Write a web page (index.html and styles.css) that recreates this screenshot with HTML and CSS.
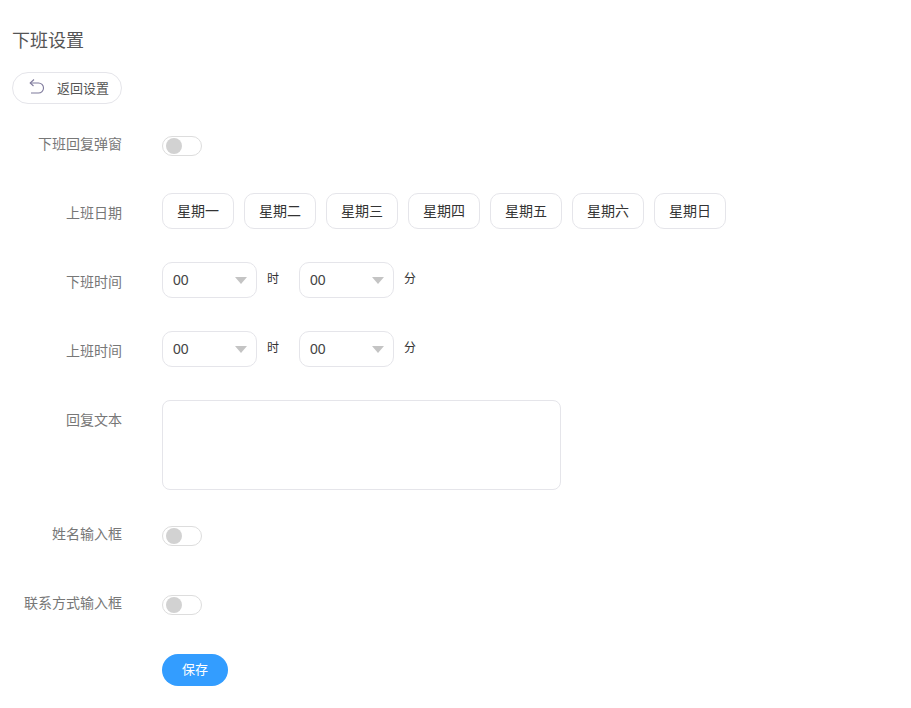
FILE: index.html
```html
<!DOCTYPE html>
<html lang="zh-CN">
<head>
  <meta charset="UTF-8" />
  <meta name="viewport" content="width=device-width, initial-scale=1" />
  <title>下班设置</title>
  <link rel="stylesheet" href="styles.css">
</head>
<body>

  <h1 class="page-title">下班设置</h1>

  <button class="back-btn">
    <svg class="back-icon" width="16" height="16" viewBox="0 0 16 16" fill="none" stroke="#7f7a9c" stroke-width="1.1">
      <path d="M1.5 4H9.5A5 5 0 0 1 9.5 14H2"/>
      <path d="M5 0.5L1.2 4L4.5 7"/>
    </svg>
    <span>返回设置</span>
  </button>

  <div class="form-row">
    <label class="form-label">下班回复弹窗</label>
    <span class="switch"><span class="switch-dot"></span></span>
  </div>

  <div class="form-row">
    <label class="form-label">上班日期</label>
    <div class="week-list">
      <button class="week-btn">星期一</button>
      <button class="week-btn">星期二</button>
      <button class="week-btn">星期三</button>
      <button class="week-btn">星期四</button>
      <button class="week-btn">星期五</button>
      <button class="week-btn">星期六</button>
      <button class="week-btn">星期日</button>
    </div>
  </div>

  <div class="form-row">
    <label class="form-label">下班时间</label>
    <div class="time-select"><span>00</span><i class="caret"></i></div>
    <span class="time-unit">时</span>
    <div class="time-select"><span>00</span><i class="caret"></i></div>
    <span class="time-unit">分</span>
  </div>

  <div class="form-row">
    <label class="form-label">上班时间</label>
    <div class="time-select"><span>00</span><i class="caret"></i></div>
    <span class="time-unit">时</span>
    <div class="time-select"><span>00</span><i class="caret"></i></div>
    <span class="time-unit">分</span>
  </div>

  <div class="form-row">
    <label class="form-label">回复文本</label>
    <textarea class="reply-text"></textarea>
  </div>

  <div class="form-row">
    <label class="form-label">姓名输入框</label>
    <span class="switch"><span class="switch-dot"></span></span>
  </div>

  <div class="form-row">
    <label class="form-label">联系方式输入框</label>
    <span class="switch"><span class="switch-dot"></span></span>
  </div>

  <div class="form-row">
    <label class="form-label"></label>
    <button class="save-btn">保存</button>
  </div>

</body>
</html>
```

FILE: styles.css
```css
body {
  font-family: "Liberation Sans", "Noto Sans CJK SC", sans-serif;
  background: #fff;
  margin: 0;
  padding: 0 12px;
  color: #333;
  font-size: 14px;
}
.page-title {
  font-size: 18px;
  font-weight: normal;
  line-height: 24px;
  color: #555;
  margin: 0;
  padding-top: 29px;
}
.back-btn {
  display: flex;
  align-items: center;
  width: 110px;
  height: 32px;
  margin: 19px 0 20px;
  padding: 0 0 0 16px;
  background: #fff;
  border: 1px solid #e5e5ea;
  border-radius: 16px;
  font-family: inherit;
  font-size: 13px;
  color: #555;
}
.back-btn span {
  margin-top: -2px;
}
.back-icon {
  margin: -2px 12px 0 0;
}
.form-row {
  display: flex;
  align-items: flex-start;
  min-height: 45px;
  margin-bottom: 24px;
}
.form-label {
  flex: none;
  width: 110px;
  margin-right: 40px;
  text-align: right;
  line-height: 40px;
  font-size: 14px;
  color: #777;
}
.switch {
  display: block;
  box-sizing: border-box;
  width: 40px;
  height: 20px;
  margin-top: 12px;
  padding: 1px 3px;
  border: 1px solid #ddd;
  border-radius: 10px;
}
.switch-dot {
  display: block;
  width: 16px;
  height: 16px;
  border-radius: 50%;
  background: #d2d2d2;
}
.week-list {
  display: flex;
  gap: 10px;
}
.week-btn {
  width: 72px;
  height: 36px;
  padding: 0 0 2px;
  background: #fff;
  border: 1px solid #e5e5ea;
  border-radius: 10px;
  font-family: inherit;
  font-size: 14px;
  color: #333;
}
.time-select {
  display: flex;
  align-items: center;
  justify-content: space-between;
  box-sizing: border-box;
  width: 95px;
  height: 36px;
  padding: 0 9px 0 10px;
  border: 1px solid #e5e5ea;
  border-radius: 10px;
  color: #444;
}
.caret {
  width: 0;
  height: 0;
  border-left: 6px solid transparent;
  border-right: 6px solid transparent;
  border-top: 7px solid #c4c4c4;
}
.time-unit {
  width: 12px;
  margin: 0 20px 0 10px;
  font-size: 12px;
  line-height: 35px;
}
.reply-text {
  display: block;
  box-sizing: border-box;
  width: 399px;
  height: 90px;
  margin: 0;
  border: 1px solid #e5e5ea;
  border-radius: 8px;
  resize: none;
}
.save-btn {
  width: 66px;
  height: 32px;
  margin-top: 2px;
  padding: 0 0 3px;
  background: #339dff;
  border: none;
  border-radius: 16px;
  font-family: inherit;
  font-size: 13px;
  color: #fff;
}
```
